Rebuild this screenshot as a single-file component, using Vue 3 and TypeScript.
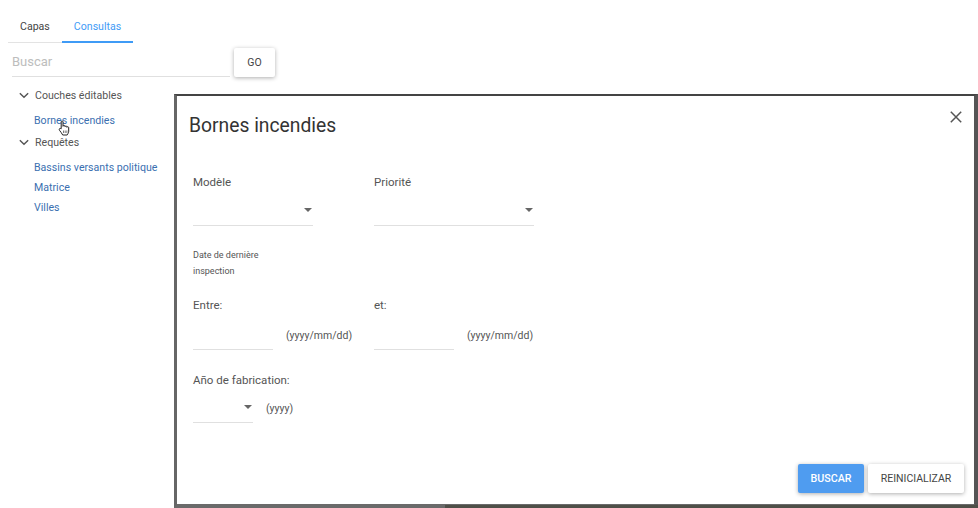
<script setup lang="ts">
const consultas: string[] = ['Bassins versants politique', 'Matrice', 'Villes']
</script>

<template>
  <div class="page">
    <aside class="side">
      <nav class="tabs">
        <span class="tab">Capas</span>
        <span class="tab active">Consultas</span>
      </nav>
      <div class="search">
        <div class="search-field">Buscar</div>
        <button class="btn go">GO</button>
      </div>
      <div class="tree">
        <div class="group">
          <svg class="chev" width="10" height="7" viewBox="0 0 12 8"><path d="M1 1.2 6 6.2 11 1.2" fill="none" stroke="#555" stroke-width="1.7" /></svg>
          <span>Couches éditables</span>
        </div>
        <div class="link first">
          Bornes incendies
          <svg class="hand" width="13" height="16" viewBox="0 0 13 16">
            <path d="M3.2 8.2V1.9c0-1.2 1.8-1.2 1.8 0v4.4c.1-1.2 1.9-1.2 2 0v.4c.1-1 1.8-1 1.9.1v.5c.2-.9 1.7-.8 1.8.3v3.6c0 1.700-1 2.700-1.500 3.800H4.700C4 13.300 2.600 12 1.500 10.300.600 8.900 2 7.700 3.200 8.800Z" fill="#fff" stroke="#222" stroke-width="1" stroke-linejoin="round" />
            <path d="M5.500 10.500v2.500M7.200 10.500v2.500M8.900 10.500v2.500" stroke="#444" stroke-width=".7" />
          </svg>
        </div>
        <div class="group second">
          <svg class="chev" width="10" height="7" viewBox="0 0 12 8"><path d="M1 1.2 6 6.2 11 1.2" fill="none" stroke="#555" stroke-width="1.7" /></svg>
          <span>Requêtes</span>
        </div>
        <div class="links">
          <div v-for="c in consultas" :key="c" class="link">{{ c }}</div>
        </div>
      </div>
    </aside>

    <section class="modal">
      <svg class="close" width="12" height="12" viewBox="0 0 12 12"><path d="M.8.8 11.200 11.200M11.200.8.8 11.200" stroke="#555" stroke-width="1.500" /></svg>
      <h2>Bornes incendies</h2>
      <div class="row selects">
        <div class="col w181">
          <label>Modèle</label>
          <div class="select w120"><i class="caret"></i></div>
        </div>
        <div class="col">
          <label>Priorité</label>
          <div class="select w160"><i class="caret"></i></div>
        </div>
      </div>
      <p class="small">Date de dernière<br />inspection</p>
      <div class="row dates">
        <div class="col w181">
          <label>Entre:</label>
          <div class="date-row">
            <div class="input"></div>
            <span class="hint">(yyyy/mm/dd)</span>
          </div>
        </div>
        <div class="col">
          <label>et:</label>
          <div class="date-row">
            <div class="input"></div>
            <span class="hint">(yyyy/mm/dd)</span>
          </div>
        </div>
      </div>
      <label class="year-label">Año de fabrication:</label>
      <div class="year-row">
        <div class="select w60"><i class="caret"></i></div>
        <span class="hint">(yyyy)</span>
      </div>
      <div class="actions">
        <button class="btn primary">BUSCAR</button>
        <button class="btn reset">REINICIALIZAR</button>
      </div>
    </section>
    <div class="map-strip"></div>
  </div>
</template>

<style>
html, body { margin: 0; background: #fff; overflow: hidden; }
</style>

<style scoped>
.page {
  position: relative;
  width: 978px;
  height: 508px;
  overflow: hidden;
  background: #fff;
  font-family: Roboto, "Noto Sans", sans-serif;
  color: #555;
}
.side { width: 290px; padding-left: 8px; box-sizing: border-box; }
.tabs {
  display: flex;
  width: 125px;
  height: 43px;
  box-sizing: border-box;
  border-bottom: 1px solid #e3e3e3;
}
.tab {
  padding: 20px 12px 0;
  font-size: 10.600px;
  line-height: 13px;
  font-weight: 400;
  color: #444;
  height: 21px;
}
.tab.active {
  color: #3f9bf6;
  height: 21px;
  border-bottom: 2px solid #3f9bf6;
  margin-bottom: -1px;
}
.search { display: flex; align-items: flex-start; margin-top: 5px; margin-left: 4px; }
.search-field {
  width: 218px;
  height: 29px;
  box-sizing: border-box;
  border-bottom: 1px solid #e0e0e0;
  color: #bdbdbd;
  font-size: 13px;
  line-height: 28px;
}
.btn {
  border: 0;
  background: #fff;
  font-family: inherit;
  font-weight: 500;
  border-radius: 2px;
  padding: 0;
  color: #444;
  box-shadow: 0 1px 4px rgba(0, 0, 0, .32);
}
.go { width: 41px; height: 29px; margin-left: 4px; font-size: 10.500px; font-weight: 400; }
.tree { padding-left: 11px; margin-top: 10px; font-size: 10.600px; }
.group { display: flex; align-items: center; height: 16px; color: #555; }
.chev { margin-right: 6px; }
.group.second { margin-top: 5px; }
.link {
  position: relative;
  padding-left: 15px;
  height: 20px;
  line-height: 20px;
  color: #3a6fb0;
}
.link.first { margin-top: 10px; height: 16px; line-height: 16px; }
.links { margin-top: 8px; }
.hand { position: absolute; left: 39px; top: 7px; }
.modal {
  position: absolute;
  left: 174px;
  top: 94px;
  width: 804px;
  height: 414px;
  box-sizing: border-box;
  background: #fff;
  border-style: solid;
  border-width: 2px 4px 4px 3px;
  border-color: #444 #555 #6a6a6a #666;
  padding: 0 0 0 16px;
}
.close { position: absolute; right: 12px; top: 15px; }
h2 {
  margin: 18px 0 0 -4px;
  height: 24px;
  font-size: 19.300px;
  line-height: 24px;
  font-weight: 400;
  color: #333;
}
label { display: block; font-size: 11.500px; line-height: 14px; color: #555; }
.row { display: flex; }
.selects { margin-top: 37px; }
.w181 { width: 181px; }
.select {
  position: relative;
  box-sizing: border-box;
  height: 30px;
  margin-top: 7px;
  border-bottom: 1px solid #e0e0e0;
}
.w120 { width: 120px; }
.w160 { width: 160px; }
.w60 { width: 60px; margin-top: 0; }
.caret {
  position: absolute;
  right: 1px;
  top: 12px;
  border: 4px solid transparent;
  border-top-color: #666;
  border-bottom: 0;
}
.small { margin: 21px 0 0; font-size: 9px; line-height: 16px; color: #555; }
.dates { margin-top: 19px; }
.date-row { display: flex; align-items: center; margin-top: 8px; }
.input { width: 80px; height: 30px; box-sizing: border-box; border-bottom: 1px solid #e0e0e0; }
.hint { font-size: 10.500px; color: #555; }
.date-row .hint { margin-left: 13px; }
.year-label { margin-top: 23px; }
.year-row { display: flex; align-items: center; margin-top: 6px; }
.year-row .hint { margin-left: 13px; }
.actions { position: absolute; right: 10px; bottom: 11px; display: flex; gap: 4px; }
.primary {
  width: 66px;
  height: 29px;
  background: #4f9cf0;
  color: #fff;
  font-size: 10.700px;
}
.reset { width: 96px; height: 29px; font-size: 10.500px; color: #444; font-weight: 400; }
.map-strip {
  position: absolute;
  left: 445px;
  right: 0;
  bottom: 0;
  height: 3px;
  background: #4f4f48;
}
</style>
